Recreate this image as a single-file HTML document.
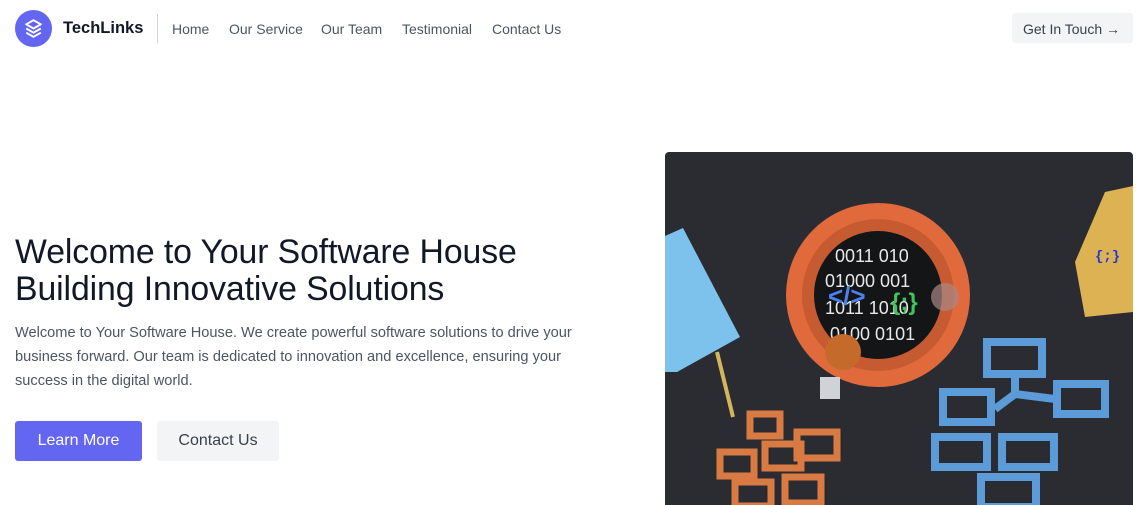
<!DOCTYPE html>
<html><head><meta charset="utf-8"><style>
*{margin:0;padding:0;box-sizing:border-box}
body{width:1136px;height:505px;overflow:hidden;background:#fff;font-family:"Liberation Sans",sans-serif;position:relative}
.abs{position:absolute}
nav a{position:absolute;top:21px;font-size:14px;color:#4b5563;white-space:nowrap}
h1{position:absolute;left:15px;top:234px;font-size:33.8px;line-height:37px;font-weight:400;color:#111827;white-space:nowrap;letter-spacing:-0.1px}
p{position:absolute;left:15px;top:321px;font-size:14.6px;line-height:24px;color:#4b5563;width:580px}
.btn{position:absolute;top:421px;height:40px;border-radius:3px;font-size:16px;display:flex;align-items:center;justify-content:center}
</style></head><body>
<div class="abs" style="left:15px;top:10px;width:37px;height:37px;border-radius:50%;background:#6366f1"></div>
<svg class="abs" style="left:21px;top:16px" width="25" height="25" viewBox="0 0 24 24" fill="none" stroke="#fff" stroke-width="1.8" stroke-linejoin="round"><path d="M12 4l7 4-7 4-7-4z"/><path d="M5 12l7 4 7-4"/><path d="M5 16l7 4 7-4"/></svg>
<div class="abs" style="left:63px;top:19px;font-size:16.5px;font-weight:700;color:#111827">TechLinks</div>
<div class="abs" style="left:157px;top:14px;width:1px;height:29px;background:#d1d5db"></div>
<nav><a style="left:172px">Home</a><a style="left:229px">Our Service</a><a style="left:321px">Our Team</a><a style="left:402px">Testimonial</a><a style="left:492px">Contact Us</a></nav>
<div class="abs" style="left:1012px;top:13px;width:121px;height:30px;background:#f3f4f6;border-radius:3px;font-size:14px;color:#374151;padding:8px 0 0 11px;white-space:nowrap">Get In Touch →</div>
<h1>Welcome to Your Software House<br>Building Innovative Solutions</h1>
<p>Welcome to Your Software House. We create powerful software solutions to drive your business forward. Our team is dedicated to innovation and excellence, ensuring your success in the digital world.</p>
<div class="btn" style="left:15px;width:127px;background:#6366f1;color:#fff">Learn More</div>
<div class="btn" style="left:157px;width:122px;background:#f3f4f6;color:#374151">Contact Us</div>
<svg class="abs" style="left:665px;top:152px" width="468" height="353" viewBox="0 0 468 353">
<rect width="468" height="360" rx="4" fill="#2a2c31"/>
<polygon points="0,84 18,76 75,185 12,220 0,220" fill="#7cc2ec"/>
<polygon points="440,40 468,34 468,160 420,165 410,110" fill="#dcb253"/>
<text x="430" y="108" font-size="14" fill="#1d3ad8" font-weight="700" font-family="Liberation Mono">{;}</text>
<line x1="52" y1="200" x2="68" y2="265" stroke="#d4b45c" stroke-width="4"/>
<circle cx="213" cy="143" r="92" fill="#e06a3c"/>
<circle cx="213" cy="143" r="76" fill="#c65a30"/>
<circle cx="213" cy="143" r="64" fill="#141516"/>
<g font-family="Liberation Sans" font-size="18" fill="#e8e8e8">
<text x="170" y="110">0011 010</text><text x="160" y="135">01000 001</text><text x="160" y="162">1011 1010</text><text x="165" y="188">0100 0101</text></g>
<text x="163" y="153" font-size="26" fill="#4b82f0" font-weight="700">&lt;/&gt;</text>
<text x="226" y="158" font-size="24" fill="#3fc35a" font-weight="700">{;}</text>
<circle cx="280" cy="145" r="14" fill="#a88" opacity=".7"/>
<circle cx="178" cy="200" r="18" fill="#c46a2a"/>
<rect x="155" y="225" width="20" height="22" fill="#cfd2d6"/>
<g fill="none" stroke="#5b9bd8" stroke-width="8"><rect x="322" y="190" width="55" height="32"/><rect x="278" y="240" width="48" height="30"/><rect x="392" y="232" width="48" height="30"/><rect x="270" y="285" width="52" height="30"/><rect x="337" y="285" width="52" height="30"/><rect x="316" y="325" width="55" height="30"/><path d="M350 222v20l-20 15M350 242l40 5"/></g>
<g fill="none" stroke="#d87a42" stroke-width="7"><rect x="85" y="262" width="30" height="22"/><rect x="55" y="300" width="34" height="24"/><rect x="100" y="292" width="36" height="24"/><rect x="132" y="280" width="40" height="26"/><rect x="70" y="330" width="36" height="24"/><rect x="120" y="325" width="36" height="26"/></g>
</svg>
</body></html>
